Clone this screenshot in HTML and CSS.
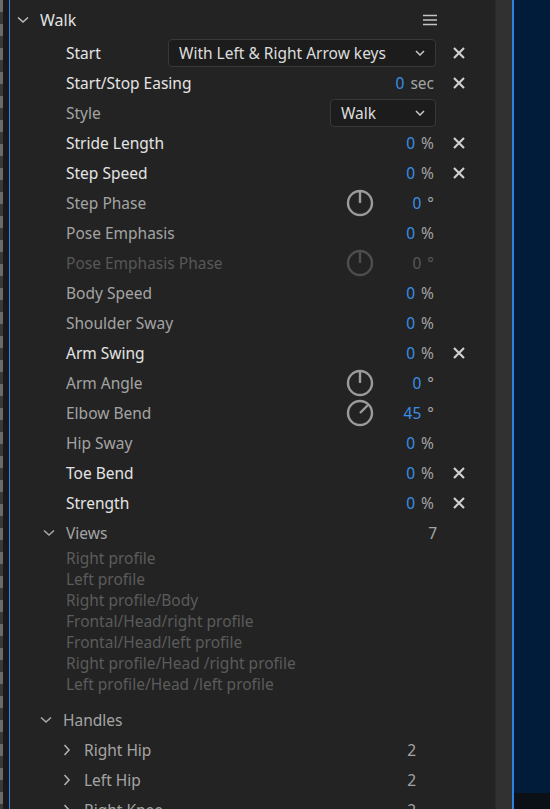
FILE: index.html
```html
<!DOCTYPE html>
<html lang="en">
<head>
  <meta charset="UTF-8">
  <title>Walk - Properties</title>
  <link rel="stylesheet" href="styles.css">
</head>
<body>
  <div class="app">
    <div class="gutter"></div>

    <!-- Properties panel -->
    <div class="panel">
      <div class="group-head">
        <svg class="chev walk-chev" width="12" height="8" viewBox="0 0 12 8"><polyline points="1,1.5 6,6 11,1.5"/></svg>
        <span class="group-title">Walk</span>
        <svg class="menu" width="14" height="12" viewBox="0 0 14 12"><path d="M0 1.5H14M0 6H14M0 10.5H14"/></svg>
      </div>

      <div class="row">
        <span class="label hi">Start</span>
        <div class="select wide">With Left &amp; Right Arrow keys
          <svg class="sel-chev" width="10" height="6" viewBox="0 0 10 6"><polyline points="1,1 5,5 9,1"/></svg>
        </div>
        <span class="act"><svg width="12" height="12" viewBox="0 0 12 12"><path d="M1 1L11 11M11 1L1 11"/></svg></span>
      </div>
      <div class="row">
        <span class="label hi">Start/Stop Easing</span>
        <span class="value"><b>0</b> sec</span>
        <span class="act"><svg width="12" height="12" viewBox="0 0 12 12"><path d="M1 1L11 11M11 1L1 11"/></svg></span>
      </div>
      <div class="row">
        <span class="label">Style</span>
        <div class="select narrow">Walk
          <svg class="sel-chev" width="10" height="6" viewBox="0 0 10 6"><polyline points="1,1 5,5 9,1"/></svg>
        </div>
        <span class="act"></span>
      </div>
      <div class="row">
        <span class="label hi">Stride Length</span>
        <span class="value"><b>0</b> %</span>
        <span class="act"><svg width="12" height="12" viewBox="0 0 12 12"><path d="M1 1L11 11M11 1L1 11"/></svg></span>
      </div>
      <div class="row">
        <span class="label hi">Step Speed</span>
        <span class="value"><b>0</b> %</span>
        <span class="act"><svg width="12" height="12" viewBox="0 0 12 12"><path d="M1 1L11 11M11 1L1 11"/></svg></span>
      </div>
      <div class="row">
        <span class="label">Step Phase</span>
        <svg class="dial" width="28" height="28" viewBox="0 0 28 28"><circle cx="14" cy="14" r="12"/><path d="M14 14V2"/></svg>
        <span class="value deg"><b>0</b> °</span>
        <span class="act"></span>
      </div>
      <div class="row">
        <span class="label">Pose Emphasis</span>
        <span class="value"><b>0</b> %</span>
        <span class="act"></span>
      </div>
      <div class="row off">
        <span class="label">Pose Emphasis Phase</span>
        <svg class="dial" width="28" height="28" viewBox="0 0 28 28"><circle cx="14" cy="14" r="12"/><path d="M14 14V2"/></svg>
        <span class="value deg"><b>0</b> °</span>
        <span class="act"></span>
      </div>
      <div class="row">
        <span class="label">Body Speed</span>
        <span class="value"><b>0</b> %</span>
        <span class="act"></span>
      </div>
      <div class="row">
        <span class="label">Shoulder Sway</span>
        <span class="value"><b>0</b> %</span>
        <span class="act"></span>
      </div>
      <div class="row">
        <span class="label hi">Arm Swing</span>
        <span class="value"><b>0</b> %</span>
        <span class="act"><svg width="12" height="12" viewBox="0 0 12 12"><path d="M1 1L11 11M11 1L1 11"/></svg></span>
      </div>
      <div class="row">
        <span class="label">Arm Angle</span>
        <svg class="dial" width="28" height="28" viewBox="0 0 28 28"><circle cx="14" cy="14" r="12"/><path d="M14 14V2"/></svg>
        <span class="value deg"><b>0</b> °</span>
        <span class="act"></span>
      </div>
      <div class="row">
        <span class="label">Elbow Bend</span>
        <svg class="dial" width="28" height="28" viewBox="0 0 28 28"><circle cx="14" cy="14" r="12"/><path d="M14 14L22.5 5.5"/></svg>
        <span class="value deg"><b>45</b> °</span>
        <span class="act"></span>
      </div>
      <div class="row">
        <span class="label">Hip Sway</span>
        <span class="value"><b>0</b> %</span>
        <span class="act"></span>
      </div>
      <div class="row">
        <span class="label hi">Toe Bend</span>
        <span class="value"><b>0</b> %</span>
        <span class="act"><svg width="12" height="12" viewBox="0 0 12 12"><path d="M1 1L11 11M11 1L1 11"/></svg></span>
      </div>
      <div class="row">
        <span class="label hi">Strength</span>
        <span class="value"><b>0</b> %</span>
        <span class="act"><svg width="12" height="12" viewBox="0 0 12 12"><path d="M1 1L11 11M11 1L1 11"/></svg></span>
      </div>

      <!-- Views -->
      <div class="sub-head views">
        <svg class="chev" width="12" height="8" viewBox="0 0 12 8"><polyline points="1,1.5 6,6 11,1.5"/></svg>
        <span class="sub-title">Views</span>
        <span class="count">7</span>
      </div>
      <ul class="view-list">
        <li>Right profile</li>
        <li>Left profile</li>
        <li>Right profile/Body</li>
        <li>Frontal/Head/right profile</li>
        <li>Frontal/Head/left profile</li>
        <li>Right profile/Head /right profile</li>
        <li>Left profile/Head /left profile</li>
      </ul>

      <!-- Handles -->
      <div class="sub-head handles">
        <svg class="chev" width="12" height="8" viewBox="0 0 12 8"><polyline points="1,1.5 6,6 11,1.5"/></svg>
        <span class="sub-title">Handles</span>
      </div>
      <div class="handle">
        <svg class="chev-r" width="8" height="12" viewBox="0 0 8 12"><polyline points="1.5,1 6,6 1.5,11"/></svg>
        <span class="handle-name">Right Hip</span>
        <span class="hcount">2</span>
      </div>
      <div class="handle">
        <svg class="chev-r" width="8" height="12" viewBox="0 0 8 12"><polyline points="1.5,1 6,6 1.5,11"/></svg>
        <span class="handle-name">Left Hip</span>
        <span class="hcount">2</span>
      </div>
      <div class="handle">
        <svg class="chev-r" width="8" height="12" viewBox="0 0 8 12"><polyline points="1.5,1 6,6 1.5,11"/></svg>
        <span class="handle-name">Right Knee</span>
        <span class="hcount">2</span>
      </div>
    </div>

    <div class="scroll"></div>
    <div class="viewer"><div class="viewer-bottom"></div></div>
  </div>
</body>
</html>
```

FILE: styles.css
```css
html, body {
  margin: 0;
  height: 100%;
  overflow: hidden;
  background: #232323;
}
body {
  font-family: "Noto Sans", "Open Sans", sans-serif;
  font-size: 15.5px;
  color: #a3a3a3;
}
.app {
  display: flex;
  height: 809px;
}
.gutter {
  width: 9px;
  flex-shrink: 0;
  background:
    repeating-linear-gradient(to bottom, #6a6a6a 0 12px, #3a3a3a 12px 24px) left / 3px 100% no-repeat,
    #1a1a1a;
}
.panel {
  width: 485px;
  flex-shrink: 0;
  border-left: 1px solid #2d84e0;
  background: #232323;
  padding-top: 5px;
  overflow: hidden;
}
.scroll {
  width: 16px;
  flex-shrink: 0;
  background: #313131;
  border-left: 1px solid #2a2a2a;
}
.viewer {
  flex: 1;
  border-left: 2px solid #2d84e0;
  background: #011b3b;
  position: relative;
}
.viewer-bottom {
  position: absolute;
  left: 0;
  right: 0;
  bottom: 0;
  height: 16px;
  background: #0a1016;
}

/* group header */
.group-head {
  height: 30px;
  display: flex;
  align-items: center;
  padding-right: 58px;
  margin-bottom: 3px;
}
.chev {
  fill: none;
  stroke: #bcbcbc;
  stroke-width: 1.6;
}
.walk-chev {
  margin-left: 7px;
  margin-right: 11px;
}
.group-title {
  flex: 1;
  color: #e2e2e2;
  font-size: 16px;
}
.menu {
  stroke: #c4c4c4;
  stroke-width: 1.5;
}

/* property rows */
.row {
  height: 30px;
  display: flex;
  align-items: center;
  padding-left: 56px;
  padding-right: 21px;
}
.label {
  flex: 1;
  color: #a3a3a3;
  white-space: nowrap;
}
.label.hi {
  color: #e4e4e4;
}
.value {
  margin-right: 10px;
  color: #a3a3a3;
  white-space: nowrap;
}
.value b {
  font-weight: normal;
  color: #3a8ee8;
  margin-right: 2px;
}
.value.deg {
  width: 56px;
  text-align: right;
}
.row.off .label,
.row.off .value,
.row.off .value b {
  color: #575757;
}
.row.off .dial circle,
.row.off .dial path {
  stroke: #4e4e4e;
}
.dial {
  fill: none;
  margin-right: 4px;
}
.dial circle,
.dial path {
  stroke: #9b9b9b;
  stroke-width: 2.4;
}
.act {
  width: 30px;
  height: 30px;
  display: flex;
  align-items: center;
  justify-content: center;
}
.act svg {
  stroke: #cfcfcf;
  stroke-width: 2.2;
}
.select {
  height: 28px;
  box-sizing: border-box;
  display: flex;
  align-items: center;
  justify-content: space-between;
  padding: 0 10px;
  margin-right: 8px;
  background: #1c1c1c;
  border: 1px solid #383838;
  border-radius: 4px;
  color: #dcdcdc;
  white-space: nowrap;
}
.select.wide {
  width: 268px;
}
.select.narrow {
  width: 106px;
}
.sel-chev {
  fill: none;
  stroke: #c8c8c8;
  stroke-width: 1.5;
}

/* views & handles */
.sub-head {
  height: 30px;
  display: flex;
  align-items: center;
  padding-right: 58px;
}
.sub-head .chev {
  stroke: #a8a8a8;
}
.views .chev {
  margin-left: 33px;
  margin-right: 11px;
}
.handles {
  margin-top: 10px;
}
.handles .chev {
  margin-left: 30px;
  margin-right: 11px;
}
.sub-title {
  flex: 1;
}
.count {
  color: #a3a3a3;
}
.view-list {
  list-style: none;
  margin: 0;
  padding: 0 0 0 56px;
}
.view-list li {
  height: 21px;
  line-height: 21px;
  color: #5b5b5b;
}
.handle {
  height: 30px;
  display: flex;
  align-items: center;
  padding-right: 79px;
}
.chev-r {
  fill: none;
  stroke: #b0b0b0;
  stroke-width: 1.6;
  margin-left: 53px;
  margin-right: 13px;
}
.handle-name {
  flex: 1;
}
```
